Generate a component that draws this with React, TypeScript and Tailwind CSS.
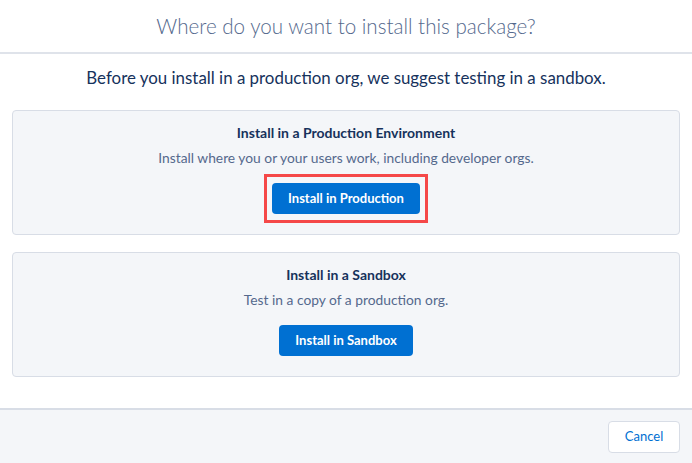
type InstallOption = {
  title: string;
  description: string;
  action: string;
  highlighted?: boolean;
};

const options: InstallOption[] = [
  {
    title: "Install in a Production Environment",
    description: "Install where you or your users work, including developer orgs.",
    action: "Install in Production",
    highlighted: true,
  },
  {
    title: "Install in a Sandbox",
    description: "Test in a copy of a production org.",
    action: "Install in Sandbox",
  },
];

function ActionButton({ label }: { label: string }) {
  return (
    <button className="h-[31px] rounded px-4 bg-[#0070d2] text-[13px] font-bold text-white">{label}</button>
  );
}

function OptionCard({ option }: { option: InstallOption }) {
  return (
    <div
      className={
        option.highlighted
          ? "flex flex-col items-center rounded border border-[#d8dde6] bg-[#f4f6f9] pt-3 pb-[11px]"
          : "flex flex-col items-center rounded border border-[#d8dde6] bg-[#f4f6f9] pt-3 pb-5"
      }
    >
      <h3 className="text-[14px] leading-5 font-bold text-[#16325c]">{option.title}</h3>
      <p className="mt-[5px] text-[13.8px] leading-5 text-[#54698d]">{option.description}</p>
      {option.highlighted ? (
        <div className="mt-[6px] border-[3px] border-[#f54848] py-[6px] px-[5px]">
          <ActionButton label={option.action} />
        </div>
      ) : (
        <div className="mt-[15px]">
          <ActionButton label={option.action} />
        </div>
      )}
    </div>
  );
}

export default function App() {
  return (
    <div
      className="flex h-[463px] w-[692px] flex-col bg-white"
      style={{ fontFamily: "Lato, 'Open Sans', sans-serif" }}
    >
      <header className="flex h-[54px] shrink-0 items-center justify-center border-b-2 border-[#dfe3ea]">
        <h1 className="text-[20.6px] font-light text-[#54698d]">Where do you want to install this package?</h1>
      </header>

      <main className="flex flex-1 flex-col px-3">
        <p className="mt-[14px] text-center text-[16.9px] leading-5 text-[#16325c]">
          Before you install in a production org, we suggest testing in a sandbox.
        </p>
        <div className="mt-[22px] flex flex-col gap-[17px]">
          {options.map((option) => (
            <OptionCard key={option.action} option={option} />
          ))}
        </div>
      </main>

      <footer className="flex h-[55px] shrink-0 items-center justify-end border-t-2 border-[#d8dde6] bg-[#f4f6f9] px-3 pt-px">
        <button className="h-8 w-[72px] rounded border border-[#d8dde6] bg-white text-[13px] text-[#0070d2]">
          Cancel
        </button>
      </footer>
    </div>
  );
}
